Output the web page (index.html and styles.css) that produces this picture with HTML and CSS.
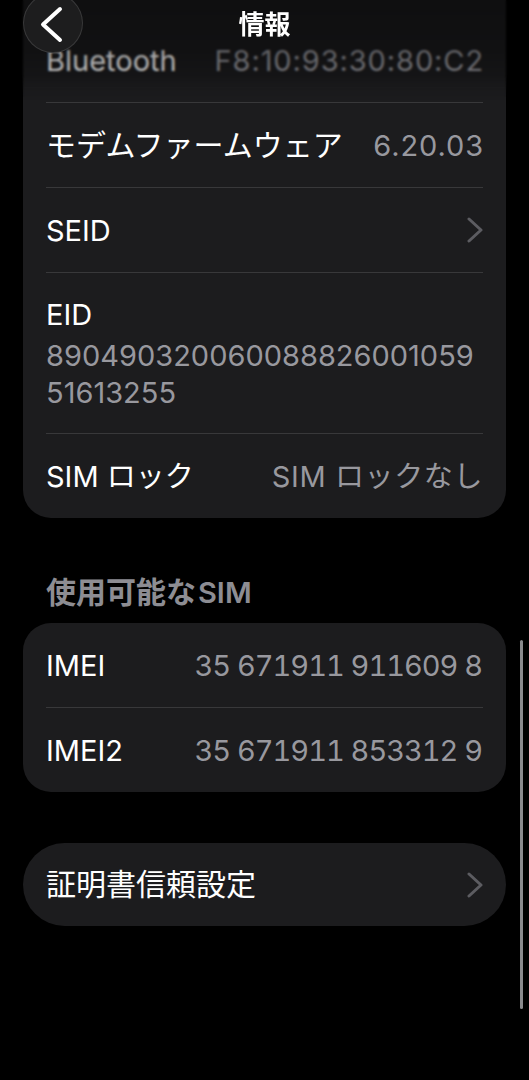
FILE: index.html
```html
<!DOCTYPE html>
<html lang="ja">
<head>
<meta charset="utf-8">
<title>情報</title>
<link rel="stylesheet" href="styles.css">
</head>
<body>
<div class="screen">
  <main class="content">
    <section class="card card-first">
      <div class="row"><span class="label">Bluetooth</span><span class="value spaced">F8:10:93:30:80:C2</span></div>
      <div class="row"><span class="label ja">モデムファームウェア</span><span class="value spaced">6.20.03</span></div>
      <div class="row"><span class="label">SEID</span><svg class="chevron" width="16" height="26" viewBox="0 0 16 26"><polyline points="2,2 14,13 2,24" /></svg></div>
      <div class="row row-stack">
        <span class="label">EID</span>
        <span class="value value-block"><span class="line">890490320060088826001059</span><span class="line">51613255</span></span>
      </div>
      <div class="row"><span class="label">SIM ロック</span><span class="value spaced-light">SIM ロックなし</span></div>
    </section>

    <h2 class="section-title">使用可能な<span class="latin">SIM</span></h2>
    <section class="card">
      <div class="row"><span class="label">IMEI</span><span class="value tnum">35 671911 911609 8</span></div>
      <div class="row"><span class="label">IMEI2</span><span class="value tnum">35 671911 853312 9</span></div>
    </section>

    <section class="card card-pill">
      <div class="row row-pill"><span class="label ja">証明書信頼設定</span><svg class="chevron" width="16" height="26" viewBox="0 0 16 26"><polyline points="2,2 14,13 2,24" /></svg></div>
    </section>
  </main>

  <header class="navbar">
    <button class="back" aria-label="戻る">
      <svg width="60" height="60" viewBox="0 0 60 60"><polyline points="37,16 20,31.5 37,47" /></svg>
    </button>
    <h1 class="title">情報</h1>
    <span class="spacer"></span>
  </header>

  <div class="scrollbar"></div>
</div>
</body>
</html>
```

FILE: styles.css
```css
html, body {
  margin: 0;
  padding: 0;
  background: #000;
}

.screen {
  position: relative;
  width: 529px;
  height: 1080px;
  overflow: hidden;
  background: #000;
  color: #fff;
  font-family: Inter, "Noto Sans CJK JP", sans-serif;
}

.content {
  padding: 0 23px;
}

.card {
  background: #1c1c1e;
  border-radius: 28px;
  padding: 0 23px;
}

.card-first {
  border-radius: 0 0 28px 28px;
  padding-top: 18px;
}

.row {
  display: flex;
  align-items: center;
  justify-content: space-between;
  height: 84px;
  font-size: 29px;
  line-height: 37px;
}

.row + .row {
  border-top: 1px solid #38383a;
}

.label {
  color: #fff;
  white-space: nowrap;
}

.label.ja {
  font-size: 30px;
}

.value {
  color: #98989e;
  white-space: nowrap;
}

.value.spaced {
  letter-spacing: 0.9px;
  margin-right: -1px;
}

.value.spaced-light {
  letter-spacing: 0.6px;
  margin-right: 0;
}

.value.tnum {
  font-variant-numeric: tabular-nums;
  letter-spacing: -1px;
  margin-right: 1px;
}

.row-stack {
  flex-direction: column;
  align-items: flex-start;
  justify-content: flex-start;
  height: auto;
  padding: 23px 0 22px;
  gap: 4px;
}

.value-block {
  display: flex;
  flex-direction: column;
}

.chevron {
  fill: none;
  stroke: #5c5c61;
  stroke-width: 3;
  stroke-linecap: round;
  stroke-linejoin: round;
}

.section-title {
  margin: 57px 0 13px;
  padding-left: 23px;
  font-size: 30px;
  line-height: 34px;
  font-weight: 600;
  color: #8d8d93;
}

.section-title .latin {
  margin-left: 2px;
  font-size: 29px;
}

.card + .card-pill {
  margin-top: 51px;
}

.card-pill {
  border-radius: 42px;
}

.row-pill {
  height: 83px;
}

.navbar {
  position: absolute;
  top: 0;
  left: 0;
  right: 0;
  height: 46px;
  padding: 0 23px;
  display: grid;
  grid-template-columns: 60px 1fr 60px;
  grid-template-rows: 46px;
  align-items: center;
}

.navbar::before {
  content: "";
  position: absolute;
  top: 0;
  left: 0;
  right: 0;
  height: 100px;
  background: linear-gradient(to bottom,
    rgba(0, 0, 0, 0.45) 0px,
    rgba(0, 0, 0, 0.38) 50px,
    rgba(0, 0, 0, 0.25) 75px,
    rgba(0, 0, 0, 0) 100px);
  backdrop-filter: blur(1px);
  -webkit-mask-image: linear-gradient(to bottom, #000 0px, #000 75px, transparent 100px);
  mask-image: linear-gradient(to bottom, #000 0px, #000 75px, transparent 100px);
  pointer-events: none;
}

.back {
  position: relative;
  width: 60px;
  height: 60px;
  padding: 0;
  margin: 0;
  border-radius: 50%;
  border: 1px solid rgba(255, 255, 255, 0.12);
  background: #1d1d1e;
  box-sizing: border-box;
}

.back svg {
  position: absolute;
  top: -1px;
  left: -1px;
  fill: none;
  stroke: #fff;
  stroke-width: 4;
  stroke-linecap: round;
  stroke-linejoin: round;
}

.title {
  position: relative;
  margin: 0;
  text-align: center;
  font-family: "Noto Sans CJK JP", sans-serif;
  font-size: 26px;
  line-height: 30px;
  font-weight: 700;
  color: #fff;
}

.scrollbar {
  position: absolute;
  left: 520px;
  top: 640px;
  width: 3px;
  height: 369px;
  border-radius: 2px;
  background: #8a8a8d;
}
```
